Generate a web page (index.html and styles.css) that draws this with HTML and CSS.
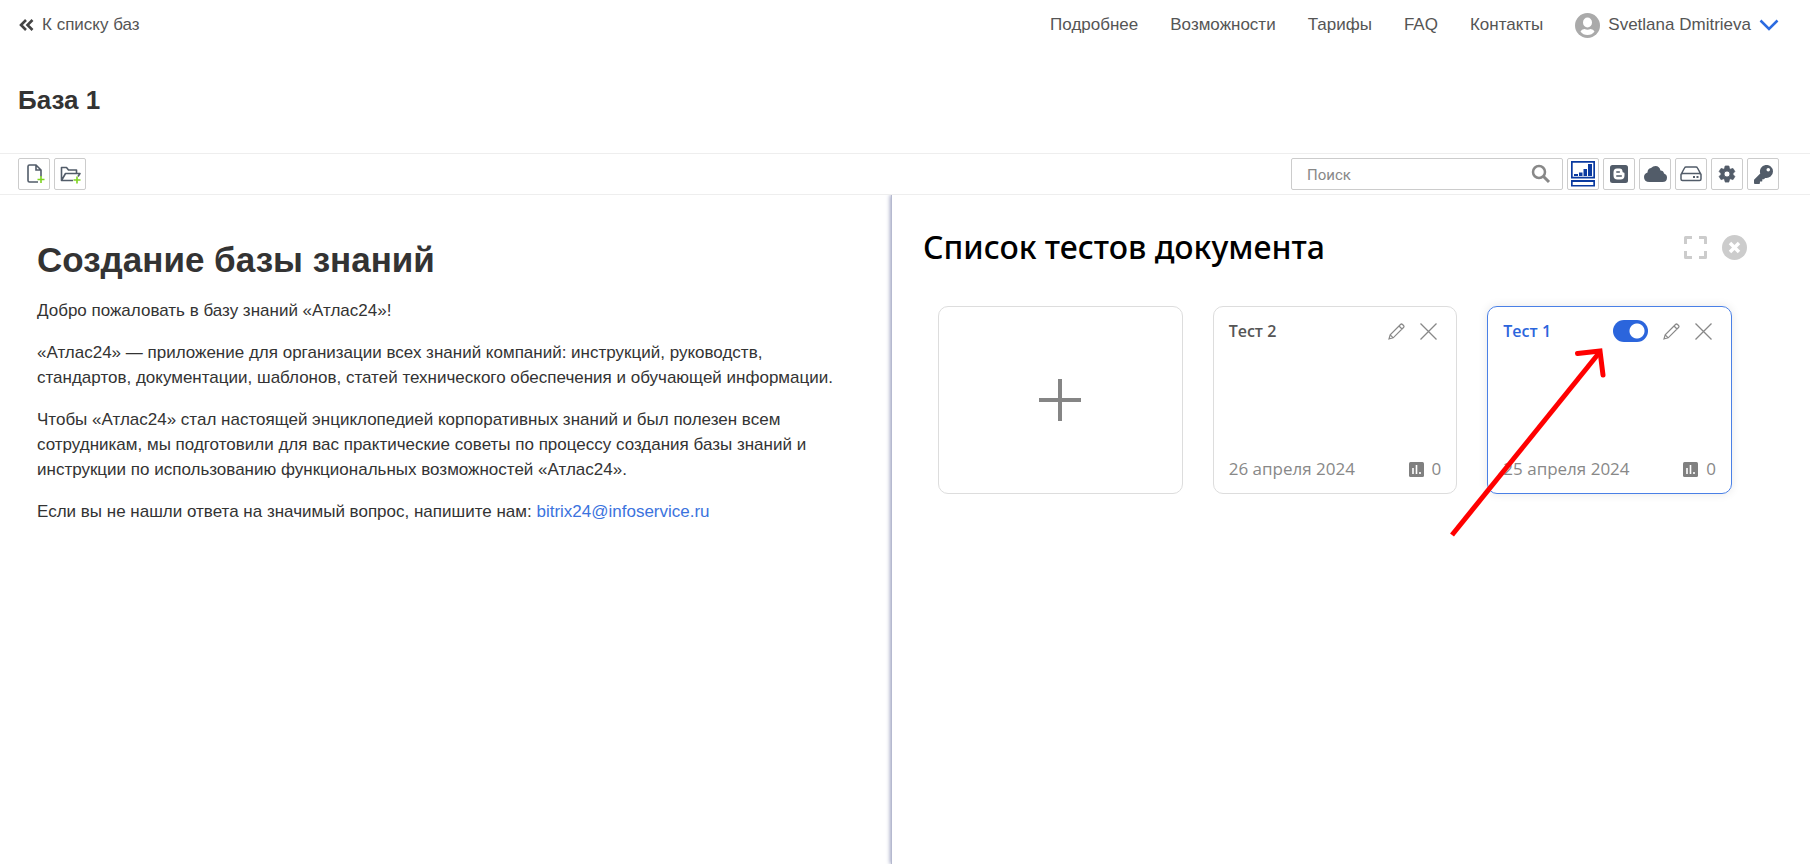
FILE: index.html
```html
<!DOCTYPE html>
<html lang="ru">
<head>
  <meta charset="UTF-8" />
  <meta name="viewport" content="width=device-width, initial-scale=1.0"/>
  <title>База 1</title>
  <link rel="stylesheet" href="styles.css">
</head>
<body>
  <header class="header">
    <a class="back" href="#">
      <svg width="15" height="12" viewBox="0 0 15 12"><path d="M7 1 2 6l5 5M13.500 1l-5 5 5 5" fill="none" stroke="#444" stroke-width="2.600"/></svg>
      К списку баз
    </a>
    <nav class="nav">
      <a href="#">Подробнее</a>
      <a href="#">Возможности</a>
      <a href="#">Тарифы</a>
      <a href="#">FAQ</a>
      <a href="#">Контакты</a>
      <a class="user" href="#">
        <svg width="25" height="25" viewBox="0 0 25 25"><circle cx="12.500" cy="12.500" r="12.500" fill="#aaa"/><ellipse cx="12.500" cy="9.500" rx="4.500" ry="5" fill="#fff"/><path d="M5.500 18.500q1-2.500 4-2.500 3 1.500 6 0 3 0 4 2.500-2.500 3.500-7 3.500t-7-3.500z" fill="#fff"/></svg>
        Svetlana Dmitrieva
        <svg width="20" height="12" viewBox="0 0 20 12"><path d="M1.500 1.500 10 10l8.500-8.500" fill="none" stroke="#2b6be0" stroke-width="2.500"/></svg>
      </a>
    </nav>
  </header>

  <h2 class="base-title">База 1</h2>

  <div class="toolbar">
    <button class="tool" aria-label="Новый документ">
      <svg width="22" height="24" viewBox="0 0 22 24"><path d="M15 20H6.500Q5 20 5 18.500v-14Q5 3 6.500 3H13l5 5v6.500M13 3v5h5" fill="none" stroke="#525c69" stroke-width="1.600"/><path d="M18 14v7M14.500 17.500h7" stroke="#7ed321" stroke-width="1.600"/></svg>
    </button>
    <button class="tool" aria-label="Новая папка">
      <svg width="24" height="24" viewBox="0 0 24 24"><path d="M15 18.500H3.500V5.500h5l2 2.500h8v3.500M3.500 18.500l4-7H22l-2 3" fill="none" stroke="#525c69" stroke-width="1.600" stroke-linejoin="round"/><path d="M19 14.500v7M15.500 18h7" stroke="#7ed321" stroke-width="1.600"/></svg>
    </button>
    <div class="search">
      <input type="text" class="search-input" placeholder="Поиск" aria-label="Поиск">
      <button class="search-btn" aria-label="Найти">
        <svg width="20" height="20" viewBox="0 0 20 20"><circle cx="8" cy="8" r="6" fill="none" stroke="#888" stroke-width="2.500"/><path d="m12.500 12.500 5.500 5.500" stroke="#888" stroke-width="3"/></svg>
      </button>
    </div>
    <button class="tool" aria-label="Тесты">
      <svg width="24" height="26" viewBox="0 0 24 26" fill="#0a3aa0"><path d="M0 0h24v17.500H0zM1.700 1.700v14h20.600v-14z" fill-rule="evenodd"/><path d="M3 13h4v2H3zM8 11.500h3.500V15H8zM12.500 8H16v7h-3.500zM17 3h4v12h-4z"/><path d="M0 19h24v6.500H0zM1.700 21v3h20.600v-3z" fill-rule="evenodd"/></svg>
    </button>
    <button class="tool" aria-label="Блог">
      <svg width="18" height="18" viewBox="0 0 18 18"><rect width="18" height="18" rx="2.500" fill="#525c69"/><path d="M7 3.500h2.500q3 0 3 3 0 1 1 1 1 0 1 1v2q0 4-4 4H7.500q-4 0-4-4v-3q0-4 3.500-4z" fill="#fff"/><path d="M6.800 7h2.500M6.800 11h4.500" stroke="#525c69" stroke-width="1.500" stroke-linecap="round"/></svg>
    </button>
    <button class="tool" aria-label="Облако">
      <svg width="23" height="16" viewBox="0 0 23 16"><path d="M5.500 16Q0 16 0 11q0-3.500 3.500-4.500Q3.500 2.500 7 2 9 0 11.500 0q4 0 5 4.500 3 0 3.500 3 3 1 3 4 0 4.500-4.500 4.500z" fill="#525c69"/></svg>
    </button>
    <button class="tool" aria-label="Диск">
      <svg width="22" height="16" viewBox="0 0 22 16"><path d="M1 8.500 4.500 2Q5 1 6 1h10q1 0 1.500 1L21 8.500V13q0 1.500-1.500 1.500h-17Q1 14.500 1 13zM1 8q1-.5 2-.5h16q1 0 2 .5" fill="none" stroke="#525c69" stroke-width="1.500"/><path d="M13 10h2v2h-2zM16.500 10h2v2h-2z" fill="#525c69"/></svg>
    </button>
    <button class="tool" aria-label="Настройки">
      <svg width="20" height="20" viewBox="0 0 24 24"><path d="M19.140 12.940c.04-.3.060-.61.060-.94 0-.32-.02-.64-.07-.94l2.030-1.580a.49.490 0 0 0 .12-.61l-1.920-3.320a.49.490 0 0 0-.59-.22l-2.390.96a7 7 0 0 0-1.620-.94L14.400 2.810A.48.480 0 0 0 13.920 2.400h-3.840a.47.470 0 0 0-.47.410l-.36 2.540c-.59.240-1.130.57-1.620.94l-2.390-.96a.47.470 0 0 0-.59.220L2.740 8.870a.47.470 0 0 0 .12.610l2.030 1.580a6 6 0 0 0 0 1.880l-2.030 1.580a.49.490 0 0 0-.12.610l1.920 3.320c.12.220.37.290.59.220l2.390-.96c.5.380 1.030.7 1.620.94l.36 2.540c.05.240.24.410.48.410h3.840c.24 0 .44-.17.470-.41l.36-2.540c.59-.24 1.130-.56 1.620-.94l2.390.96c.22.080.47 0 .59-.22l1.920-3.320a.47.470 0 0 0-.12-.61zM12 15.600a3.600 3.600 0 1 1 0-7.200 3.600 3.600 0 0 1 0 7.200z" fill="#525c69" stroke="#525c69"/></svg>
    </button>
    <button class="tool" aria-label="Права доступа">
      <svg width="19" height="19" viewBox="0 0 512 512"><path d="M512 176A176 176 0 0 1 299 348l-24 27a24 24 0 0 1-18 8h-33v40a24 24 0 0 1-24 24h-40v40a24 24 0 0 1-24 24H24a24 24 0 0 1-24-24v-78a24 24 0 0 1 7-17l162-162A176 176 0 1 1 512 176zM336 128a48 48 0 1 0 96 0 48 48 0 0 0-96 0z" fill="#525c69"/></svg>
    </button>
  </div>

  <main class="content">
    <article class="document">
      <h1>Создание базы знаний</h1>
      <p>Добро пожаловать в базу знаний «Атлас24»!</p>
      <p>«Атлас24» — приложение для организации всех знаний компаний: инструкций, руководств, стандартов, документации, шаблонов, статей технического обеспечения и обучающей информации.</p>
      <p>Чтобы «Атлас24» стал настоящей энциклопедией корпоративных знаний и был полезен всем сотрудникам, мы подготовили для вас практические советы по процессу создания базы знаний и инструкции по использованию функциональных возможностей «Атлас24».</p>
      <p>Если вы не нашли ответа на значимый вопрос, напишите нам: <a href="mailto:bitrix24@infoservice.ru">bitrix24@infoservice.ru</a></p>
    </article>

    <section class="panel">
      <div class="panel-head">
        <h2>Список тестов документа</h2>
        <button class="icon-btn" aria-label="Развернуть">
          <svg width="23" height="23" viewBox="0 0 23 23"><path d="M1.500 8V1.500H8M15 1.500h6.500V8M21.500 15v6.500H15M8 21.500H1.500V15" fill="none" stroke="#ccc" stroke-width="3" stroke-linejoin="round"/></svg>
        </button>
        <button class="icon-btn" aria-label="Закрыть">
          <svg width="25" height="25" viewBox="0 0 25 25"><circle cx="12.500" cy="12.500" r="12.500" fill="#ccc"/><path d="m8 8 9 9M17 8l-9 9" stroke="#fff" stroke-width="3.500"/></svg>
        </button>
      </div>

      <div class="tests">
        <button class="card card-add" aria-label="Добавить тест">
          <svg width="42" height="42" viewBox="0 0 42 42"><path d="M21 0v42M0 21h42" stroke="#858585" stroke-width="4"/></svg>
        </button>

        <div class="card">
          <div class="card-row">
            <h3>Тест 2</h3>
            <button class="icon-btn" aria-label="Изменить">
              <svg width="17" height="17" viewBox="0 0 17 17"><path d="M1 16l1.200-4.200L12.500 1.500q1-1 2 0l1 1q1 1 0 2L5.200 14.800zM11 3l3 3M2.200 11.800l3 3" fill="none" stroke="#888" stroke-width="1.200"/></svg>
            </button>
            <button class="icon-btn" aria-label="Удалить">
              <svg width="17" height="17" viewBox="0 0 17 17"><path d="m.5.5 16 16M16.500.5l-16 16" stroke="#888" stroke-width="1.300"/></svg>
            </button>
          </div>
          <div class="card-row card-foot">
            <span class="date">26 апреля 2024</span>
            <svg width="15" height="15" viewBox="0 0 15 15"><rect width="15" height="15" rx="1.500" fill="#808080"/><path d="M4 6v6M7.500 3v9M11 10v2" stroke="#fff" stroke-width="1.600"/></svg>
            <span>0</span>
          </div>
        </div>

        <div class="card card-active">
          <div class="card-row">
            <h3>Тест 1</h3>
            <input type="checkbox" class="switch" aria-label="Тест активен" checked>
            <button class="icon-btn" aria-label="Изменить">
              <svg width="17" height="17" viewBox="0 0 17 17"><path d="M1 16l1.200-4.200L12.500 1.500q1-1 2 0l1 1q1 1 0 2L5.200 14.800zM11 3l3 3M2.200 11.800l3 3" fill="none" stroke="#888" stroke-width="1.200"/></svg>
            </button>
            <button class="icon-btn" aria-label="Удалить">
              <svg width="17" height="17" viewBox="0 0 17 17"><path d="m.5.5 16 16M16.500.5l-16 16" stroke="#888" stroke-width="1.300"/></svg>
            </button>
          </div>
          <div class="card-row card-foot">
            <span class="date">25 апреля 2024</span>
            <svg width="15" height="15" viewBox="0 0 15 15"><rect width="15" height="15" rx="1.500" fill="#808080"/><path d="M4 6v6M7.500 3v9M11 10v2" stroke="#fff" stroke-width="1.600"/></svg>
            <span>0</span>
          </div>
          <!-- pointer to the switch -->
          <svg class="arrow" width="160" height="195" viewBox="0 0 160 195"><path d="M5 190 152 8" stroke="#f00" stroke-width="5"/><path d="M130.500 8.500 153 6l3 24" fill="none" stroke="#f00" stroke-width="5" stroke-linecap="round"/></svg>
        </div>
      </div>
    </section>
  </main>
</body>
</html>
```

FILE: styles.css
```css
* {
  box-sizing: border-box;
}
body {
  margin: 0;
  min-height: 100vh;
  display: flex;
  flex-direction: column;
  font-family: "Liberation Sans", Arial, sans-serif;
  font-size: 17px;
  color: #333;
  background: #fff;
}
h1, h2, h3, p {
  margin: 0;
}
a {
  color: #3b73de;
  text-decoration: none;
}
button {
  display: flex;
  align-items: center;
  justify-content: center;
  padding: 0;
  border: 0;
  background: none;
  cursor: pointer;
}
svg {
  display: block;
  flex: none;
}

/* header */
.header {
  display: flex;
  align-items: center;
  justify-content: space-between;
  height: 50px;
  padding: 0 31px 0 19px;
}
.header a {
  color: #555;
}
.back, .user {
  display: flex;
  align-items: center;
  gap: 8px;
}
.nav {
  display: flex;
  align-items: center;
  gap: 32px;
}
.base-title {
  padding: 35px 18px 38px;
  font-size: 26px;
  line-height: 30px;
}

/* toolbar */
.toolbar {
  display: flex;
  align-items: center;
  gap: 4px;
  height: 42px;
  padding: 0 31px 0 18px;
  border-top: 1px solid #eee;
  border-bottom: 1px solid #eee;
}
.tool {
  width: 32px;
  height: 32px;
  border: 1px solid #ccc;
  border-radius: 2px;
  background: #fff;
}
.search {
  display: flex;
  align-items: center;
  width: 272px;
  height: 32px;
  margin-left: auto;
  padding: 0 11px 0 15px;
  border: 1px solid #ccc;
  border-radius: 2px;
}
.search-input {
  flex: 1;
  min-width: 0;
  padding: 2px 0 0;
  border: 0;
  outline: 0;
  font-family: Roboto, sans-serif;
  font-size: 15px;
}
.search-input::placeholder {
  color: #888;
}

/* content */
.content {
  flex: 1;
  display: flex;
}
.document {
  flex: 1;
  padding: 42px 35px 0 37px;
  line-height: 25px;
}
.document h1 {
  margin-bottom: 15px;
  font-size: 35px;
  line-height: 46px;
}
.document p {
  margin-bottom: 17px;
}
.panel {
  width: 919px;
  padding: 32px 78px 0 31px;
  background: #fff;
  border-left: 1px solid #b5b9cf;
  box-shadow: -1px 0 4px #9ea3c2;
  clip-path: inset(0 0 0 -10px);
  font-family: "Open Sans", "Noto Sans", sans-serif;
}
.panel-head {
  display: flex;
  align-items: center;
  gap: 15px;
  margin-right: -15px;
}
.panel-head h2 {
  flex: 1;
  font-family: "Noto Sans", "Open Sans", sans-serif;
  font-size: 32px;
  font-weight: 500;
  line-height: 40px;
  color: #000;
}
.tests {
  display: grid;
  grid-template-columns: repeat(3, 1fr);
  gap: 30px;
  margin: 39px 0 0 15px;
}
.card {
  position: relative;
  display: flex;
  flex-direction: column;
  justify-content: space-between;
  height: 188px;
  padding: 11px 15px;
  border: 1px solid #ddd;
  border-radius: 10px;
  font-size: 17px;
  line-height: 26px;
  color: #888;
}
.card-add {
  align-items: center;
  justify-content: center;
}
.card-row {
  display: flex;
  align-items: center;
  gap: 15px;
  padding-right: 4px;
}
.card-row h3 {
  flex: 1;
  font-size: 16px;
  font-weight: 600;
  color: #555;
}
.card-foot {
  gap: 8px;
  padding-right: 0;
}
.date {
  flex: 1;
}
.card-active {
  border-color: #4a80e6;
  box-shadow: 0 0 10px rgba(0, 0, 0, 0.1);
}
.card-active h3 {
  color: #2b65dc;
}
.switch {
  appearance: none;
  width: 35px;
  height: 22px;
  margin: 0;
  border-radius: 11px;
  background: #2b65dc radial-gradient(circle at 24px 11px, #fff 7px, transparent 8px);
  cursor: pointer;
}
.arrow {
  position: absolute;
  left: -41px;
  top: 38px;
  pointer-events: none;
}
```
